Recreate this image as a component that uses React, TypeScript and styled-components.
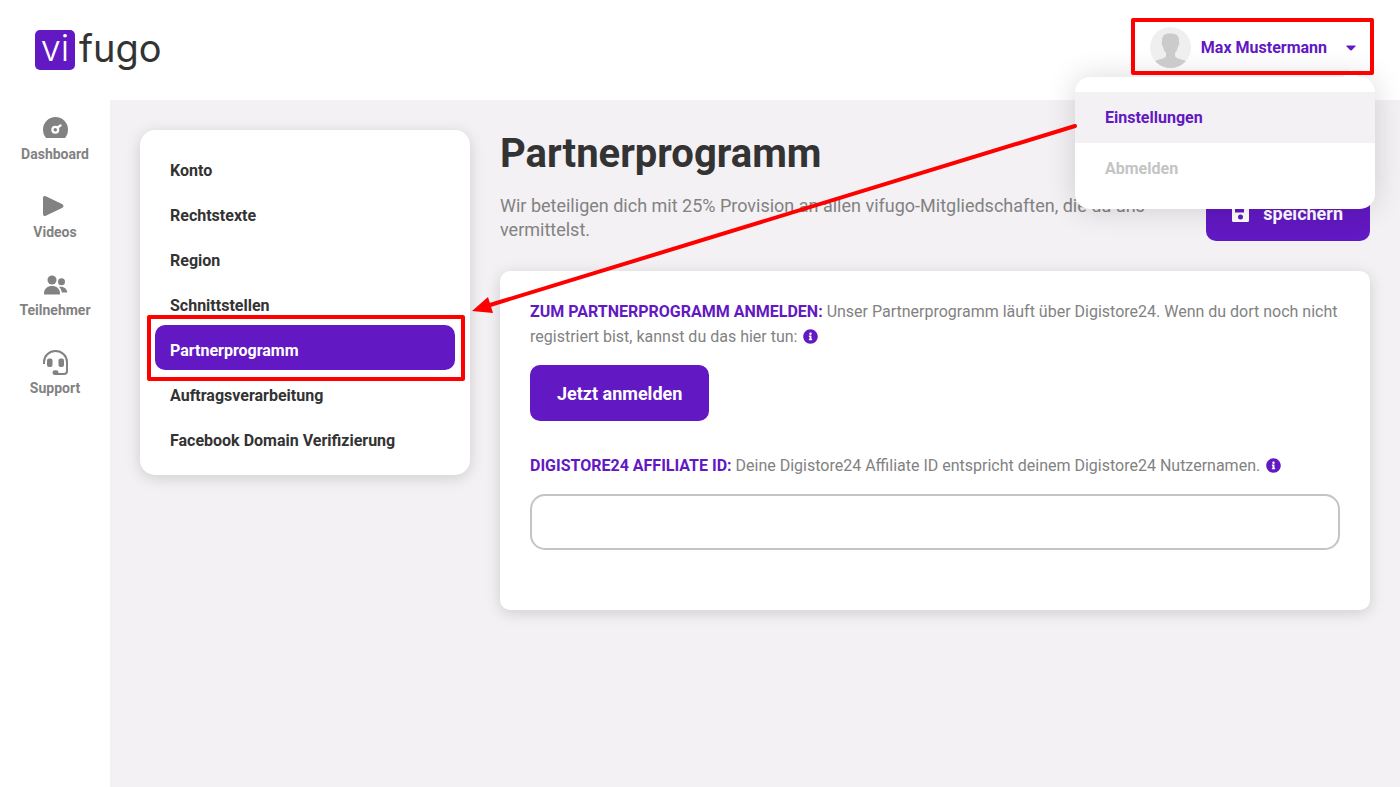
import React from "react";
import styled, { createGlobalStyle, css } from "styled-components";
import { FaInfoCircle } from "react-icons/fa";

const purple = "#6218c2";
const red = "#ff0000";
const grey = "#828282";
const dark = "#333333";
const canvas = "#f3f1f3";

const GlobalStyle = createGlobalStyle`
  *, *::before, *::after { box-sizing: border-box; }
  body {
    margin: 0;
    background: #ffffff;
    color: ${grey};
    font-family: Roboto, "Liberation Sans", sans-serif;
    font-size: 16px;
  }
  h1, p { margin: 0; }
  a { text-decoration: none; }
  button, input { font: inherit; }
`;

const Page = styled.div`
  min-height: 100vh;
  display: flex;
  flex-direction: column;
`;

const Header = styled.header`
  height: 100px;
  display: flex;
  justify-content: space-between;
  align-items: flex-start;
  padding: 18px 26px 0 35px;
`;

const Logo = styled.a`
  display: flex;
  align-items: center;
  gap: 4px;
  margin-top: 12px;
  color: ${dark};
  font-family: Inter, sans-serif;
  font-size: 38px;
  line-height: 36px;
`;

const LogoMark = styled.span`
  width: 40px;
  height: 40px;
  border-radius: 5px;
  background: ${purple};
  color: #ffffff;
  font-size: 36px;
  font-weight: 300;
  text-align: center;
`;

const LogoText = styled.span`
  height: 40px;
`;

const UserArea = styled.div`
  position: relative;
  z-index: 2;
`;

const UserButton = styled.button`
  display: flex;
  align-items: center;
  height: 57px;
  padding: 1px 14px 0 15px;
  border: 4px solid ${red};
  border-radius: 2px;
  background: transparent;
  color: ${purple};
  font-weight: 700;
  cursor: pointer;

  svg:first-child { margin-right: 10px; }
  svg:last-child { margin-left: 19px; }
`;

const Menu = styled.nav`
  position: absolute;
  top: 59px;
  right: -1px;
  z-index: -1;
  width: 300px;
  padding: 15px 0;
  border-radius: 15px;
  background: #ffffff;
  box-shadow: 0 0 30px rgba(0, 0, 0, 0.15);

  &::before {
    content: "";
    position: absolute;
    top: -8px;
    right: 15px;
    border: 9px solid transparent;
    border-top-width: 0;
    border-bottom-color: #ffffff;
  }
`;

const MenuLink = styled.a<{ $active?: boolean }>`
  display: block;
  padding: 0 30px;
  line-height: 51px;
  font-weight: 700;
  color: ${(p) => (p.$active ? purple : "#c4c4c4")};
  background: ${(p) => (p.$active ? canvas : "transparent")};
`;

const Pointer = styled.svg`
  position: absolute;
  top: 102px;
  right: 294px;
  pointer-events: none;
`;

const Body = styled.div`
  flex: 1;
  display: flex;
`;

const Sidebar = styled.nav`
  width: 110px;
  flex-shrink: 0;
  display: flex;
  flex-direction: column;
  gap: 31px;
  padding-top: 16px;
`;

const SideLink = styled.a`
  display: flex;
  flex-direction: column;
  align-items: center;
  gap: 5px;
  color: ${grey};
  font-size: 14px;
  font-weight: 700;
  line-height: 17px;
`;

const Content = styled.main`
  flex: 1;
  min-width: 0;
  display: flex;
  align-items: flex-start;
  gap: 30px;
  padding: 30px;
  background: ${canvas};
`;

const cardShadow = css`
  background: #ffffff;
  box-shadow: 0 3px 15px rgba(0, 0, 0, 0.15);
`;

const SubNav = styled.nav`
  ${cardShadow}
  width: 330px;
  flex-shrink: 0;
  padding: 15px;
  border-radius: 15px;
`;

const SubLink = styled.a<{ $active?: boolean }>`
  position: relative;
  display: block;
  padding: 14px 15px 7px;
  border-radius: 10px;
  line-height: 24px;
  font-weight: 700;
  color: ${(p) => (p.$active ? "#ffffff" : dark)};
  background: ${(p) => (p.$active ? purple : "transparent")};

  ${(p) =>
    p.$active &&
    css`
      &::after {
        content: "";
        position: absolute;
        inset: -10px -10px -11px -8px;
        border: 4px solid ${red};
        border-radius: 2px;
      }
    `}
`;

const Main = styled.div`
  flex: 1;
  min-width: 0;
`;

const Title = styled.h1`
  color: ${dark};
  font-size: 40px;
  font-weight: 700;
  line-height: 48px;
`;

const Intro = styled.div`
  display: flex;
  align-items: flex-start;
  gap: 30px;
  margin: 7px 0 29px;
`;

const Lead = styled.p`
  flex: 1;
  padding-top: 9px;
  font-size: 18px;
  line-height: 24px;
`;

const Button = styled.button`
  display: inline-flex;
  align-items: center;
  gap: 14px;
  height: 56px;
  padding: 0 27px;
  border: 0;
  border-radius: 10px;
  background: ${purple};
  color: #ffffff;
  font-size: 18px;
  font-weight: 700;
  cursor: pointer;
`;

const SaveButton = styled(Button)`
  padding-left: 26px;
`;

const Card = styled.form`
  ${cardShadow}
  padding: 28px 30px 60px;
  border-radius: 10px;
`;

const FieldText = styled.p`
  line-height: 25px;

  strong { color: ${purple}; text-transform: uppercase; }
  svg { margin-left: 2px; vertical-align: -2px; color: ${purple}; }
`;

const Action = styled.div`
  display: flex;
  margin: 16px 0 32px;
`;

const TextInput = styled.input`
  display: block;
  width: 100%;
  height: 56px;
  margin-top: 16px;
  padding: 0 20px;
  border: 2px solid #c4c4c4;
  border-radius: 15px;
  background: #ffffff;
  color: ${dark};
`;

const Avatar = () => (
  <svg width="41" height="41" viewBox="0 0 41 41" aria-hidden="true">
    <clipPath id="avatarClip"><circle cx="20.5" cy="20.5" r="20.5" /></clipPath>
    <g clipPath="url(#avatarClip)">
      <rect width="41" height="41" fill="#efefef" />
      <path fill="#cbcbcb" d="M12 15C11.500 9 14 6.500 20.500 6.500S29.500 9 29 15C29.800 16 29.200 18.500 28 19.500C27.500 23 26 25 25 26V29C26 32 33 32 37 34.500L38 41H3L4 34.500C8 32 15 32 16 29V26C15 25 13.500 23 13 19.500C11.800 18.500 11.200 16 12 15Z" />
    </g>
  </svg>
);

const Caret = () => (
  <svg width="10" height="8" viewBox="0 0 10 8" fill="currentColor" aria-hidden="true">
    <path d="M1 2.500h8q1 .3.400 1L5.700 7.200q-.7.600-1.400 0L.6 3.500Q0 2.800 1 2.500Z" />
  </svg>
);

const DashboardIcon = () => (
  <svg width="25" height="25" viewBox="0 0 25 25" aria-hidden="true">
    <path fill="currentColor" d="M3 22C1 19.500 0 17 0 13.500a12.500 12.500 0 0 1 25 0C25 17 24 19.500 22 22Z" />
    <circle cx="12.300" cy="13.800" r="2.900" fill="none" stroke="#fff" strokeWidth="2.200" />
    <path d="M14.500 11.600 17.500 9.500" stroke="#fff" strokeWidth="2.400" strokeLinecap="round" />
  </svg>
);

const VideoIcon = () => (
  <svg width="25" height="25" viewBox="0 0 25 25" aria-hidden="true">
    <path fill="currentColor" d="M0 4Q0 1.200 2.800 2.200L19 10Q22 12 19 14L2.800 21.800Q0 22.800 0 20Z" />
  </svg>
);

const PeopleIcon = () => (
  <svg width="25" height="25" viewBox="0 0 25 25" fill="currentColor" aria-hidden="true">
    <circle cx="9" cy="8" r="4.500" />
    <circle cx="18.500" cy="9.700" r="3.500" />
    <path d="M1 22.500v-1C1 16.500 4.500 14 9 14s8 2.500 8 7.500v1Z" />
    <path d="M16 14.800c4.500-.8 8 1.400 8.300 5.700h-5.500c-.3-2.500-1.300-4.300-2.800-5.700Z" />
  </svg>
);

const SupportIcon = () => (
  <svg width="25" height="25" viewBox="0 0 25 25" aria-hidden="true">
    <path fill="none" stroke="currentColor" strokeWidth="2" d="M1 14v-2A11.500 11 0 0 1 24 12v9q0 3-3 3h-8" />
    <rect x="4" y="8.500" width="5.500" height="8.500" rx="2" fill="currentColor" />
    <rect x="15.500" y="8.500" width="5.500" height="8.500" rx="2" fill="currentColor" />
    <rect x="9.500" y="20.300" width="6" height="4.700" rx="2.300" fill="currentColor" />
  </svg>
);

const SaveIcon = () => (
  <svg width="17" height="17" viewBox="0 0 17 17" aria-hidden="true">
    <path fill="currentColor" fillRule="evenodd" d="M1.500 0H13l4 4v11.500q0 1.500-1.500 1.500h-14Q0 17 0 15.500v-14Q0 0 1.500 0ZM3 2.500v5h9v-5ZM8.500 9.500a2.500 2.500 0 1 0 0 5 2.500 2.500 0 0 0 0-5Z" />
  </svg>
);

const sideItems = [
  { label: "Dashboard", Icon: DashboardIcon },
  { label: "Videos", Icon: VideoIcon },
  { label: "Teilnehmer", Icon: PeopleIcon },
  { label: "Support", Icon: SupportIcon },
];

const settings = [
  "Konto",
  "Rechtstexte",
  "Region",
  "Schnittstellen",
  "Partnerprogramm",
  "Auftragsverarbeitung",
  "Facebook Domain Verifizierung",
];

export default function App() {
  return (
    <Page>
      <GlobalStyle />
      <Header>
        <Logo href="#">
          <LogoMark>vi</LogoMark>
          <LogoText>fugo</LogoText>
        </Logo>
        <UserArea>
          <UserButton type="button" aria-expanded="true">
            <Avatar />
            Max Mustermann
            <Caret />
          </UserButton>
          <Menu>
            <MenuLink href="#einstellungen" $active>Einstellungen</MenuLink>
            <MenuLink href="#abmelden">Abmelden</MenuLink>
          </Menu>
          <Pointer width="608" height="200" viewBox="0 0 608 200" aria-hidden="true">
            <path d="M603 6 18 185" stroke={red} strokeWidth="4" strokeLinecap="round" />
            <path d="M0 191 16 177 21 193Z" fill={red} />
          </Pointer>
        </UserArea>
      </Header>
      <Body>
        <Sidebar>
          {sideItems.map(({ label, Icon }) => (
            <SideLink key={label} href={"#" + label.toLowerCase()}>
              <Icon />
              {label}
            </SideLink>
          ))}
        </Sidebar>
        <Content>
          <SubNav>
            {settings.map((label) => (
              <SubLink key={label} href="#" $active={label === "Partnerprogramm"}>
                {label}
              </SubLink>
            ))}
          </SubNav>
          <Main>
            <Title>Partnerprogramm</Title>
            <Intro>
              <Lead>
                Wir beteiligen dich mit 25% Provision an allen vifugo-Mitgliedschaften, die du uns
                vermittelst.
              </Lead>
              <SaveButton type="submit" form="affiliate">
                <SaveIcon />
                speichern
              </SaveButton>
            </Intro>
            <Card id="affiliate">
              <FieldText>
                <strong>Zum Partnerprogramm anmelden:</strong> Unser Partnerprogramm läuft über
                Digistore24. Wenn du dort noch nicht registriert bist, kannst du das hier tun:{" "}
                <FaInfoCircle size={15} />
              </FieldText>
              <Action>
                <Button type="button">Jetzt anmelden</Button>
              </Action>
              <FieldText as="label" htmlFor="affiliate-id">
                <strong>Digistore24 Affiliate ID:</strong> Deine Digistore24 Affiliate ID entspricht
                deinem Digistore24 Nutzernamen. <FaInfoCircle size={15} />
              </FieldText>
              <TextInput id="affiliate-id" type="text" />
            </Card>
          </Main>
        </Content>
      </Body>
    </Page>
  );
}
